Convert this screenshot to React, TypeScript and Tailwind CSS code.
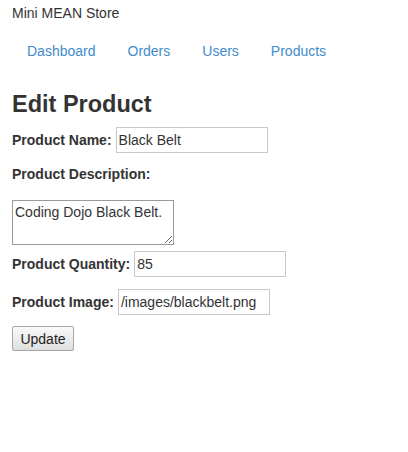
const font = "font-['Liberation_Sans',Arial,sans-serif]";

const navLinks = ["Dashboard", "Orders", "Users", "Products"];

const App = () => {
  return (
    <div className={`${font} bg-white text-[14px] leading-[20px] text-[#333] min-h-[452px] px-3 pt-[3px]`}>
      <div>Mini MEAN Store</div>

      <ul className="flex mt-[8px]">
        {navLinks.map((link, idx) => (
          <li key={link} className={idx > 0 ? "ml-[2px]" : ""}>
            <a href="#" className="block px-[15px] py-[10px] text-[#428bca]">
              {link}
            </a>
          </li>
        ))}
      </ul>

      <h3 className="mt-[20px] mb-[10px] text-[23.5px] leading-[26px] font-bold">
        Edit Product
      </h3>

      <form onSubmit={(e) => e.preventDefault()}>
        <div className="flex items-center gap-1 h-[26px]">
          <label className="font-bold">Product Name:</label>
          <input
            type="text"
            defaultValue="Black Belt"
            className="w-[152px] h-[26px] border border-[#c8c8c8] px-[2px] outline-none"
          />
        </div>

        <div className="mt-[11px] font-bold">Product Description:</div>

        <textarea
          defaultValue="Coding Dojo Black Belt."
          className="block mt-[16px] w-[162px] h-[45px] border border-[#9a9a9a] px-[2px] py-[2px] leading-[18px] outline-none"
        />

        <div className="flex items-center gap-1 h-[26px] mt-[6px]">
          <label className="font-bold">Product Quantity:</label>
          <input
            type="text"
            defaultValue="85"
            className="w-[152px] h-[26px] border border-[#c8c8c8] px-[2px] outline-none"
          />
        </div>

        <div className="flex items-center gap-1 h-[26px] mt-[12px]">
          <label className="font-bold">Product Image:</label>
          <input
            type="text"
            defaultValue="/images/blackbelt.png"
            className="w-[152px] h-[26px] border border-[#c8c8c8] px-[2px] outline-none"
          />
        </div>

        <button
          type="submit"
          className="mt-[11px] w-[62px] h-[25px] border border-[#a6a6a6] rounded-[2px] bg-gradient-to-b from-[#fafafa] to-[#dedede] text-[#222]"
        >
          Update
        </button>
      </form>
    </div>
  );
};

export default App;
